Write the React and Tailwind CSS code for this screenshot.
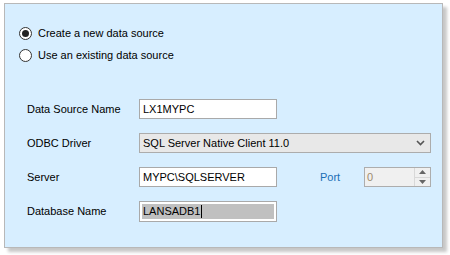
import React from 'react';

function Radio({ checked, label }) {
  return (
    <label className="flex items-center h-[22px]">
      <span className="w-[13px] h-[13px] rounded-full border border-[#333] bg-white flex items-center justify-center">
        {checked && <span className="w-[7px] h-[7px] rounded-full bg-[#222]" />}
      </span>
      <span className="ml-[6px]">{label}</span>
    </label>
  );
}

function Row({ label, children }) {
  return (
    <div className="flex items-center h-[20px]">
      <div className="w-[112px]">{label}</div>
      {children}
    </div>
  );
}

export default function App() {
  return (
    <div
      className="w-[450px] h-[255px] bg-white text-[11px] text-black overflow-hidden"
      style={{ fontFamily: '"Liberation Sans", Arial, sans-serif' }}
    >
      <div className="ml-[4px] mt-[3px] w-[439px] h-[245px] bg-[#d7eeff] border border-[#b8b8b8] shadow-[4px_4px_3px_rgba(0,0,0,0.22)]">
        <div className="pl-[14px] pt-[18px] flex flex-col">
          <Radio checked label="Create a new data source" />
          <Radio label="Use an existing data source" />
        </div>

        <div className="pl-[22px] pt-[33px] flex flex-col gap-[14px]">
          <Row label="Data Source Name">
            <div className="w-[138px] h-[20px] bg-white border border-[#a9a9a9] flex items-center px-[3px]">
              LX1MYPC
            </div>
          </Row>
          <Row label="ODBC Driver">
            <div className="w-[292px] h-[20px] bg-[#e8e8e8] border border-[#acacac] flex items-center justify-between pl-[3px] pr-[5px]">
              <span>SQL Server Native Client 11.0</span>
              <svg width="9" height="6" viewBox="0 0 9 6">
                <path d="M1 1 L4.5 4.5 L8 1" stroke="#555" strokeWidth="1.6" fill="none" />
              </svg>
            </div>
          </Row>
          <Row label="Server">
            <div className="w-[138px] h-[20px] bg-white border border-[#a9a9a9] flex items-center px-[3px]">
              MYPC\SQLSERVER
            </div>
            <div className="w-[87px] pl-[43px] text-[#1a6fb5]">Port</div>
            <div className="w-[67px] h-[20px] bg-[#f0f0f0] border border-[#adadad] flex items-stretch">
              <span className="flex-1 pl-[2px] flex items-center text-[#9d8a6e]">0</span>
              <div className="w-[16px] flex flex-col border-l border-[#d8d8d8]">
                <div className="flex-1 flex items-center justify-center border-b border-[#d8d8d8]">
                  <svg width="7" height="4" viewBox="0 0 7 4"><path d="M0 4 L3.5 0 L7 4 Z" fill="#666" /></svg>
                </div>
                <div className="flex-1 flex items-center justify-center">
                  <svg width="7" height="4" viewBox="0 0 7 4"><path d="M0 0 L3.5 4 L7 0 Z" fill="#666" /></svg>
                </div>
              </div>
            </div>
          </Row>
          <Row label="Database Name">
            <div className="w-[138px] h-[21px] bg-white border border-[#a9a9a9] p-[2px] flex">
              <div className="flex-1 bg-[#c0c0c0] flex items-center px-[1px]">
                LANSADB1<span className="w-px h-[13px] bg-black ml-px" />
              </div>
            </div>
          </Row>
        </div>
      </div>
    </div>
  );
}
